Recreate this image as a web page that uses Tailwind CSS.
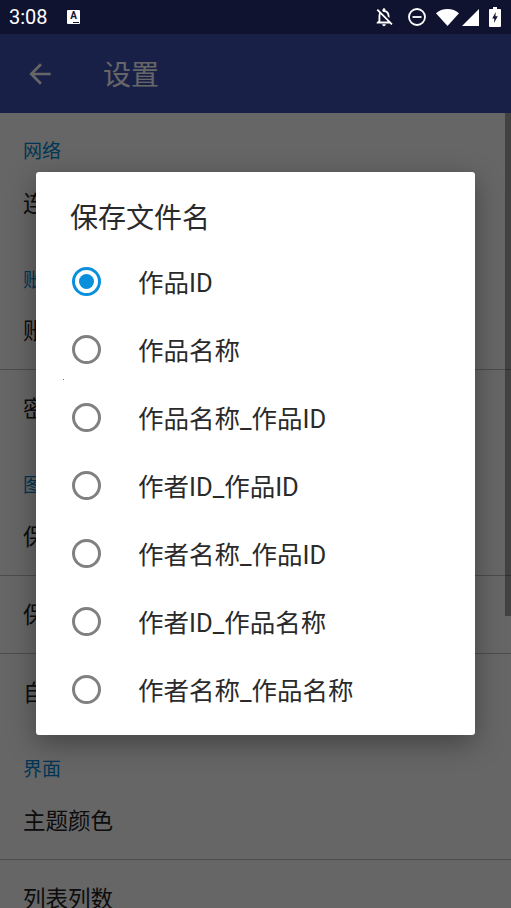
<!DOCTYPE html>
<html lang="zh-CN">
<head>
  <meta charset="UTF-8" />
  <meta name="viewport" content="width=device-width, initial-scale=1.0"/>
  <title>设置</title>
  <script src="https://cdn.jsdelivr.net/npm/@tailwindcss/browser@4"></script>
</head>
<body class="bg-white font-['Roboto','Noto_Sans_CJK_SC',sans-serif]">
  <div class="relative w-[511px] h-[908px] overflow-hidden flex flex-col">

    <!-- status bar -->
    <div class="relative z-20 h-[34px] shrink-0 bg-[#0f1330] flex items-center text-white">
      <span class="ml-[9px] w-[58px] text-[20px] leading-none">3:08</span>
      <div class="relative w-[13px] h-[14px] bg-white rounded-[1px] flex justify-center">
        <span class="font-bold text-[10px] leading-[11px] text-[#0f1330]">A</span>
        <span class="absolute bottom-[1px] right-[1px] w-[6px] h-[1px] bg-[#0f1330]"></span>
      </div>
      <svg class="ml-[293px] w-[22px] h-[22px]" viewBox="0 0 24 24" fill="#fff"><path d="M12 22c1.1 0 2-.9 2-2h-4c0 1.1.9 2 2 2zm0-15.5c2.49 0 4 2.02 4 4.5v.1l2 2V11c0-3.07-1.63-5.64-4.5-6.32V4c0-.83-.67-1.5-1.5-1.5s-1.5.67-1.5 1.5v.68c-.24.06-.47.15-.69.23l1.64 1.64c.18-.02.36-.05.55-.05zM5.41 3.35L4 4.76l2.81 2.81C6.29 8.57 6 9.74 6 11v5l-2 2v1h14.24l1.74 1.74 1.41-1.41L5.41 3.35zM16 17H8v-6c0-.68.12-1.32.34-1.9L16 16.76V17z"/></svg>
      <svg class="ml-[12px] w-[20px] h-[20px]" viewBox="0 0 20 20" fill="none" stroke="#fff" stroke-width="1.8"><circle cx="10" cy="10" r="8"/><path d="M5.5 10h9"/></svg>
      <svg class="ml-[9px] w-[23px] h-[17px]" viewBox="0 0 23 17" fill="#fff"><path d="M11.5 17L0 4.2C3 1.6 7 0 11.5 0S20 1.6 23 4.2z"/></svg>
      <svg class="ml-[3px] w-[17px] h-[17px]" viewBox="0 0 17 17" fill="#fff"><path d="M0 17L17 0v17z"/></svg>
      <svg class="ml-[10px] w-[12px] h-[20px]" viewBox="0 0 12 20" fill="#fff"><path fill-rule="evenodd" d="M4 0h4v2h3a1 1 0 0 1 1 1v16a1 1 0 0 1-1 1H1a1 1 0 0 1-1-1V3a1 1 0 0 1 1-1h3zM6.8 5L3.2 11.5h2.2L4.9 16l3.9-6.8H6.4z"/></svg>
    </div>

    <!-- app bar -->
    <header class="h-[79px] shrink-0 bg-[#3f51b5] flex items-center text-white">
      <svg class="ml-[24px] w-[32px] h-[32px]" viewBox="0 0 24 24" fill="#fff"><path d="M20 11H7.83l5.59-5.59L12 4l-8 8 8 8 1.41-1.41L7.83 13H20v-2z"/></svg>
      <h1 class="ml-[47px] mt-[4px] text-[28px] leading-none">设置</h1>
    </header>

    <!-- settings list behind the dialog -->
    <main class="flex-1 bg-white text-[#212121] text-[22.5px] leading-[30px]">
      <h2 class="h-[52px] pt-[25px] pl-[23px] text-[19px] leading-[28px] text-[#0288d1]">网络</h2>
      <div class="h-[77px] flex items-center pl-[23px]">连接</div>

      <h2 class="h-[51px] pt-[25px] pl-[23px] text-[19px] leading-[28px] text-[#0288d1]">账户</h2>
      <div class="h-[77px] flex items-center pl-[23px] border-b border-[#bdbdbd]">账号</div>
      <div class="h-[77px] flex items-center pl-[23px]">密码</div>

      <h2 class="h-[52px] pt-[25px] pl-[23px] text-[19px] leading-[28px] text-[#0288d1]">图片</h2>
      <div class="h-[77px] flex items-center pl-[23px] border-b border-[#bdbdbd]">保存</div>
      <div class="h-[78px] flex items-center pl-[23px] border-b border-[#bdbdbd]">保存</div>
      <div class="h-[77px] flex items-center pl-[23px]">自动</div>

      <h2 class="h-[52px] pt-[25px] pl-[23px] text-[19px] leading-[28px] text-[#0288d1]">界面</h2>
      <div class="h-[77px] flex items-center pl-[23px] border-b border-[#bdbdbd]">主题颜色</div>
      <div class="h-[77px] flex items-center pl-[23px]">列表列数</div>
    </main>

    <!-- scrollbar -->
    <div class="absolute z-[5] right-0 top-[113px] w-[6px] h-[503px] bg-black/35"></div>

    <!-- scrim -->
    <div class="absolute inset-0 z-10 bg-black/60"></div>

    <!-- dialog -->
    <div class="absolute z-20 left-[36px] top-[172px] w-[439px] h-[563px] bg-white rounded-[3px] shadow-[0_8px_28px_rgba(0,0,0,0.35)] text-[#2a2a2a]">
      <h3 class="pl-[34px] pt-[26px] h-[75px] text-[28px] leading-[42px]">保存文件名</h3>
      <span class="absolute left-[27px] top-[207px] w-px h-px bg-[#0a8fdc]"></span>
      <ul class="text-[25.5px] leading-[34px]">
        <li class="h-[68px] flex items-center pl-[36px]">
          <span class="w-[29px] h-[29px] rounded-full border-[3px] border-[#0a8fdc] flex items-center justify-center"><span class="w-[15px] h-[15px] rounded-full bg-[#0a8fdc]"></span></span>
          <span class="ml-[37px] pt-[3px]">作品ID</span>
        </li>
        <li class="h-[68px] flex items-center pl-[36px]">
          <span class="w-[29px] h-[29px] rounded-full border-[3px] border-[#808080]"></span>
          <span class="ml-[37px] pt-[3px]">作品名称</span>
        </li>
        <li class="h-[68px] flex items-center pl-[36px]">
          <span class="w-[29px] h-[29px] rounded-full border-[3px] border-[#808080]"></span>
          <span class="ml-[37px] pt-[3px]">作品名称_作品ID</span>
        </li>
        <li class="h-[68px] flex items-center pl-[36px]">
          <span class="w-[29px] h-[29px] rounded-full border-[3px] border-[#808080]"></span>
          <span class="ml-[37px] pt-[3px]">作者ID_作品ID</span>
        </li>
        <li class="h-[68px] flex items-center pl-[36px]">
          <span class="w-[29px] h-[29px] rounded-full border-[3px] border-[#808080]"></span>
          <span class="ml-[37px] pt-[3px]">作者名称_作品ID</span>
        </li>
        <li class="h-[68px] flex items-center pl-[36px]">
          <span class="w-[29px] h-[29px] rounded-full border-[3px] border-[#808080]"></span>
          <span class="ml-[37px] pt-[3px]">作者ID_作品名称</span>
        </li>
        <li class="h-[68px] flex items-center pl-[36px]">
          <span class="w-[29px] h-[29px] rounded-full border-[3px] border-[#808080]"></span>
          <span class="ml-[37px] pt-[3px]">作者名称_作品名称</span>
        </li>
      </ul>
    </div>
  </div>
</body>
</html>
